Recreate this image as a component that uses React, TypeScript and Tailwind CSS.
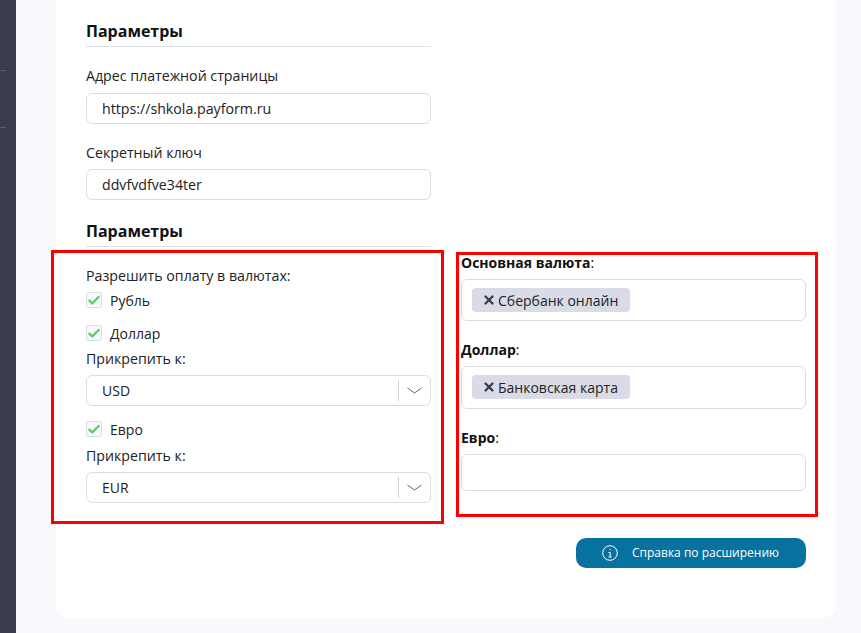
import React from 'react';
import { Check, X } from 'lucide-react';

const sans = "font-['Open_Sans','Noto_Sans',sans-serif]";

function Heading({ children }: { children: React.ReactNode }) {
  return (
    <div className="h-[27px] border-b border-[#dfe0ea] text-[16px] leading-[22px] font-bold text-[#111]">
      {children}
    </div>
  );
}

function TextField({ value }: { value: string }) {
  return (
    <div className="flex h-[31px] items-center rounded-[6px] border border-[#dcdcdc] bg-white pl-[15px] text-[14.2px] text-[#222]">
      {value}
    </div>
  );
}

function SelectField({ value }: { value: string }) {
  return (
    <div className="flex h-[31px] items-center rounded-[6px] border border-[#dcdcdc] bg-white pl-[15px] text-[14px] text-[#222]">
      <span className="flex-1">{value}</span>
      <span className="flex h-[21px] w-[32px] items-center justify-center border-l border-[#d4d4d4]">
        <svg width="15" height="7" viewBox="0 0 15 7" fill="none" stroke="#555" strokeWidth="0.9">
          <path d="M0.5 1 L7.5 6 L14.5 1" />
        </svg>
      </span>
    </div>
  );
}

function CheckRow({ label, className }: { label: string; className?: string }) {
  return (
    <div className={`flex h-[20px] items-center gap-[8px] text-[14px] text-[#222] ${className ?? ''}`}>
      <span className="flex h-[16px] w-[16px] items-center justify-center rounded-[2px] border border-[#dcdde8] bg-[#f8f9fd]">
        <Check size={15} strokeWidth={4} className="text-[#5fcf65]" />
      </span>
      {label}
    </div>
  );
}

function Chip({ label }: { label: string }) {
  return (
    <span className="inline-flex h-[24px] items-center gap-[2px] rounded-[4px] bg-[#d9dbe7] pr-[12px] pl-[10px] text-[14px] text-[#222]">
      <X size={14} strokeWidth={4} className="text-[#3a3d4f]" />
      {label}
    </span>
  );
}

function Label({ children, className }: { children: React.ReactNode; className?: string }) {
  return <div className={`text-[14.2px] leading-[20px] text-[#222] ${className ?? ''}`}>{children}</div>;
}

function BoldLabel({ title, className }: { title: string; className?: string }) {
  return (
    <div className={`text-[14px] leading-[20px] text-[#111] ${className ?? ''}`}>
      <b>{title}</b>:
    </div>
  );
}

function InfoIcon() {
  return (
    <svg width="16" height="16" viewBox="0 0 16 16" fill="none" stroke="#fff" strokeWidth="1">
      <circle cx="8" cy="8" r="7.3" />
      <path d="M6.5 7.5 H8.2 V12 M6.5 12 H9.5" />
      <circle cx="8" cy="4.6" r="0.7" fill="#fff" stroke="none" />
    </svg>
  );
}

export default function App() {
  return (
    <div className={`relative flex h-[633px] w-[861px] overflow-hidden bg-[#f8f9fd] ${sans}`}>
      <aside className="w-[16px] shrink-0 bg-[#3a3d4f] pt-[70px]">
        <div className="h-px w-[6px] bg-[#5d6070]" />
        <div className="mt-[56px] h-px w-[6px] bg-[#5d6070]" />
      </aside>

      <main className="mt-[-20px] ml-[40px] h-[638px] w-[780px] rounded-[12px] bg-white px-[30px] pt-[40px]">
        <div className="w-[345px]">
          <Heading>Параметры</Heading>
          <Label className="mt-[19px]">Адрес платежной страницы</Label>
          <div className="mt-[7px]">
            <TextField value="https://shkola.payform.ru" />
          </div>
          <Label className="mt-[19px]">Секретный ключ</Label>
          <div className="mt-[6px]">
            <TextField value="ddvfvdfve34ter" />
          </div>
          <div className="mt-[20px]">
            <Heading>Параметры</Heading>
          </div>
        </div>

        <div className="flex gap-[30px]">
          <div className="w-[345px]">
            <Label className="mt-[19px]">Разрешить оплату в валютах:</Label>
            <CheckRow label="Рубль" className="mt-[4px]" />
            <CheckRow label="Доллар" className="mt-[13px]" />
            <Label className="mt-[6px]">Прикрепить к:</Label>
            <div className="mt-[6px]">
              <SelectField value="USD" />
            </div>
            <CheckRow label="Евро" className="mt-[13px]" />
            <Label className="mt-[7px]">Прикрепить к:</Label>
            <div className="mt-[6px]">
              <SelectField value="EUR" />
            </div>
          </div>

          <div className="w-[345px]">
            <BoldLabel title="Основная валюта" className="mt-[6px]" />
            <div className="mt-[6px] flex h-[42px] items-start rounded-[6px] border border-[#dcdcdc] px-[10px] pt-[8px]">
              <Chip label="Сбербанк онлайн" />
            </div>
            <BoldLabel title="Доллар" className="mt-[19px]" />
            <div className="mt-[6px] flex h-[43px] items-start rounded-[6px] border border-[#dcdcdc] px-[10px] pt-[8px]">
              <Chip label="Банковская карта" />
            </div>
            <BoldLabel title="Евро" className="mt-[19px]" />
            <div className="mt-[6px] h-[37px] rounded-[6px] border border-[#dcdcdc]" />
          </div>
        </div>

        <div className="mt-[35px] flex justify-end">
          <button className="flex h-[30px] w-[230px] items-center rounded-[10px] bg-[#0771a0] pl-[26px] text-[12px] text-white">
            <InfoIcon />
            <span className="ml-[14px]">Справка по расширению</span>
          </button>
        </div>
      </main>

      {/* red annotation frames drawn over the screenshot */}
      <div className="absolute top-[250px] left-[51px] h-[274px] w-[393px] border-[3px] border-[#ff0000]" />
      <div className="absolute top-[252px] left-[456px] h-[265px] w-[362px] border-[3px] border-[#ff0000]" />
    </div>
  );
}
